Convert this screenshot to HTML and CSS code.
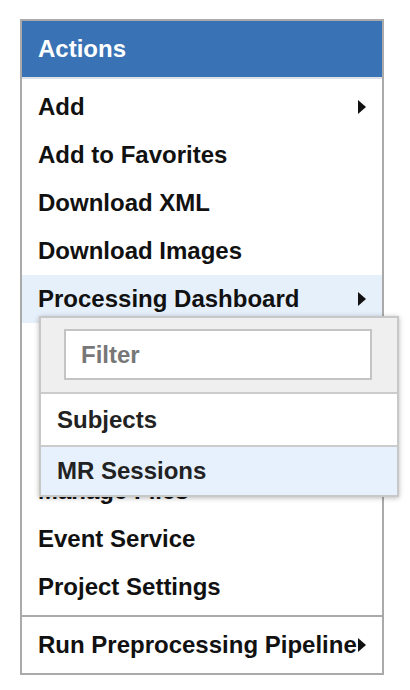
FILE: index.html
```html
<!DOCTYPE html>
<html>
<head>
<meta charset="utf-8">
<link rel="stylesheet" href="styles.css">
</head>
<body>
<div class="menu">
  <div class="menu-header">Actions</div>
  <div class="menu-group">
    <div class="item"><span>Add</span><i class="arrow"></i></div>
    <div class="item"><span>Add to Favorites</span></div>
    <div class="item"><span>Download XML</span></div>
    <div class="item"><span>Download Images</span></div>
    <div class="item active"><span>Processing Dashboard</span><i class="arrow"></i></div>
    <div class="item covered"></div>
    <div class="item covered"></div>
    <div class="item covered"></div>
    <div class="item"><span>Manage Files</span></div>
    <div class="item"><span>Event Service</span></div>
    <div class="item"><span>Project Settings</span></div>
  </div>
  <div class="menu-group">
    <div class="item"><span>Run Preprocessing Pipeline</span><i class="arrow"></i></div>
  </div>

  <div class="submenu">
    <div class="filter-area">
      <input class="filter" type="text" placeholder="Filter">
    </div>
    <div class="sub-item first">Subjects</div>
    <div class="sub-item hover">MR Sessions</div>
  </div>
</div>
</body>
</html>
```

FILE: styles.css
```css
* { box-sizing: border-box; }
html, body { margin: 0; padding: 0; background: #fff; }
body {
  font-family: "Liberation Sans", Arial, sans-serif;
  font-weight: bold;
  font-size: 24px;
}
.menu {
  position: relative;
  margin: 19px 0 0 20px;
  width: 364px;
  border: 2px solid #aaaaaa;
  background: #fff;
}
.menu-header {
  height: 58px;
  line-height: 56px;
  background: #3a73b5;
  color: #fff;
  padding-left: 16px;
  border-bottom: 2px solid #dde2e9;
}
.menu-group {
  padding: 4px 0;
}
.menu-group + .menu-group {
  border-top: 2px solid #aaaaaa;
}
.item {
  height: 48px;
  line-height: 48px;
  padding: 0 16px;
  color: #111;
  display: flex;
  align-items: center;
  justify-content: space-between;
  white-space: nowrap;
}
.item.active { background: #e6f0fb; }
.arrow {
  flex: none;
  width: 0;
  height: 0;
  border-top: 7px solid transparent;
  border-bottom: 7px solid transparent;
  border-left: 8px solid #111;
}
.submenu {
  position: absolute;
  left: 17px;
  top: 295px;
  width: 360px;
  border: 2px solid #c8c8c8;
  background: #fff;
  box-shadow: 0 1px 5px rgba(0,0,0,0.28);
}
.filter-area {
  background: #efefef;
  padding: 11px 25px 12px 23px;
  border-bottom: 2px solid #cccccc;
}
.filter {
  display: block;
  width: 308px;
  height: 51px;
  border: 2px solid #c4c4c4;
  background: #fff;
  padding: 0 15px;
  font-family: "Liberation Sans", Arial, sans-serif;
  font-weight: bold;
  font-size: 24px;
  outline: none;
  margin: 0;
}
.filter::placeholder { color: #777; opacity: 1; }
.sub-item {
  height: 48px;
  line-height: 48px;
  padding-left: 16px;
  color: #222;
}
.sub-item.first {
  height: 51px;
  padding-top: 2px;
}
.sub-item + .sub-item {
  border-top: 2px solid #cccccc;
  height: 50px;
}
.sub-item.hover { background: #e7f1fd; }
```
